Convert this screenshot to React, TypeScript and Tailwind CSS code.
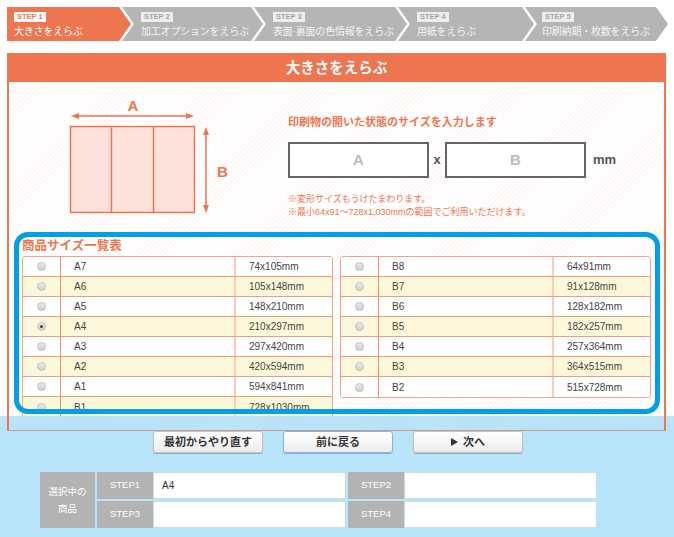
import React from 'react';

const steps = [
  { label: 'STEP 1', text: '大きさをえらぶ', cls: 'w-[124px] pl-[7px] bg-[#ed7550] [clip-path:polygon(0_0,calc(100%_-_12px)_0,100%_50%,calc(100%_-_12px)_100%,0_100%)]', active: true },
  { label: 'STEP 2', text: '加工オプションをえらぶ', cls: 'w-[141px] -ml-[9px] pl-[19px] bg-[#b5b5b5] [clip-path:polygon(0_0,calc(100%_-_12px)_0,100%_50%,calc(100%_-_12px)_100%,0_100%,12px_50%)]', active: false },
  { label: 'STEP 3', text: '表面·裏面の色情報をえらぶ', cls: 'w-[153px] -ml-[9px] pl-[19px] bg-[#b5b5b5] [clip-path:polygon(0_0,calc(100%_-_12px)_0,100%_50%,calc(100%_-_12px)_100%,0_100%,12px_50%)]', active: false },
  { label: 'STEP 4', text: '用紙をえらぶ', cls: 'w-[136px] -ml-[9px] pl-[19px] bg-[#b5b5b5] [clip-path:polygon(0_0,calc(100%_-_12px)_0,100%_50%,calc(100%_-_12px)_100%,0_100%,12px_50%)]', active: false },
  { label: 'STEP 5', text: '印刷納期・枚数をえらぶ', cls: 'w-[143px] -ml-[9px] pl-[17px] bg-[#b5b5b5] [clip-path:polygon(0_0,calc(100%_-_12px)_0,100%_50%,calc(100%_-_12px)_100%,0_100%,12px_50%)]', active: false },
];

const aSizes = [
  ['A7', '74x105mm'], ['A6', '105x148mm'], ['A5', '148x210mm'], ['A4', '210x297mm'],
  ['A3', '297x420mm'], ['A2', '420x594mm'], ['A1', '594x841mm'], ['B1', '728x1030mm'],
];
const bSizes = [
  ['B8', '64x91mm'], ['B7', '91x128mm'], ['B6', '128x182mm'], ['B5', '182x257mm'],
  ['B4', '257x364mm'], ['B3', '364x515mm'], ['B2', '515x728mm'],
];

function Radio({ checked }: { checked?: boolean }) {
  return (
    <span className="flex h-[9px] w-[9px] items-center justify-center rounded-full border border-[#bdbdbd] bg-[linear-gradient(#ececec,#cfcfcf)]">
      {checked && <span className="h-[3px] w-[3px] rounded-full bg-[#444]" />}
    </span>
  );
}

function SizeTable({ rows, checked }: { rows: string[][]; checked?: string }) {
  return (
    <div className="w-[311px] self-start overflow-hidden rounded-[3px] border border-[#f1a48c] bg-white">
      {rows.map(([name, size], i) => (
        <div
          key={name}
          className={i % 2 === 1 ? 'flex h-[20px] border-b border-[#f09c7e] bg-[#fdf8da] last:border-b-0' : 'flex h-[20px] border-b border-[#f09c7e] bg-white last:border-b-0'}
        >
          <div className="flex w-[38px] items-center justify-center border-r border-[#ee8d6c]">
            <Radio checked={name === checked} />
          </div>
          <div className="flex w-[175px] items-center border-r-2 border-[#f8cbbd] pl-[13px] text-[10px] text-[#444]">{name}</div>
          <div className="flex flex-1 items-center pl-[13px] text-[10px] text-[#444]">{size}</div>
        </div>
      ))}
    </div>
  );
}

function Diagram() {
  const o = '#ed7550';
  return (
    <svg width="170" height="130" viewBox="0 0 170 130" className="ml-[51px] mt-[13px] shrink-0">
      <text x="73" y="16" textAnchor="middle" fontSize="15" fontWeight="bold" fill={o} fontFamily="Liberation Sans, sans-serif">A</text>
      <line x1="16" y1="21" x2="129" y2="21" stroke={o} strokeWidth="1.5" />
      <polygon points="11,21 19,18 19,24" fill={o} />
      <polygon points="134,21 126,18 126,24" fill={o} />
      <rect x="10.5" y="31.5" width="124" height="86" fill="#fce2da" stroke={o} strokeWidth="1.5" />
      <line x1="51.5" y1="31.5" x2="51.5" y2="117.5" stroke={o} strokeWidth="1.5" />
      <line x1="93.5" y1="31.5" x2="93.5" y2="117.5" stroke={o} strokeWidth="1.5" />
      <line x1="146" y1="37" x2="146" y2="113" stroke={o} strokeWidth="1.5" />
      <polygon points="146,32 143,40 149,40" fill={o} />
      <polygon points="146,118 143,110 149,110" fill={o} />
      <text x="157" y="82" fontSize="15" fontWeight="bold" fill={o} fontFamily="Liberation Sans, sans-serif">B</text>
    </svg>
  );
}

function Button({ children, focused }: { children: React.ReactNode; focused?: boolean }) {
  return (
    <button
      className={focused
        ? 'flex h-[22px] w-[110px] items-center justify-center gap-[5px] rounded-[3px] border border-[#86b4e6] bg-[linear-gradient(#ffffff,#ececec)] text-[11px] font-bold text-[#333] shadow-[0_1px_1px_rgba(0,0,0,0.25)]'
        : 'flex h-[22px] w-[110px] items-center justify-center gap-[5px] rounded-[3px] border border-[#c2c2c2] bg-[linear-gradient(#ffffff,#ececec)] text-[11px] font-bold text-[#333] shadow-[0_1px_1px_rgba(0,0,0,0.25)]'}
    >
      {children}
    </button>
  );
}

function Pair({ label, value }: { label: string; value?: string }) {
  return (
    <div className="flex h-[27px]">
      <div className="flex w-[56px] items-center justify-center bg-[#b3b3b3] text-[9.5px] text-white">{label}</div>
      <div className="flex w-[193px] items-center border border-[#c6dde9] bg-white pl-[8px] text-[10px] text-[#333]">{value}</div>
    </div>
  );
}

export default function App() {
  return (
    <div className="min-h-[537px] w-[674px] bg-[linear-gradient(to_bottom,#ffffff_416px,#b9e5fb_416px)] [font-family:'Liberation_Sans','Noto_Sans_CJK_JP',sans-serif]">
      {/* steps */}
      <div className="flex pl-[7px] pt-[7px]">
        {steps.map((s) => (
          <div key={s.label} className={`h-[34px] shrink-0 pt-[5px] leading-none ${s.cls}`}>
            <div
              className={s.active
                ? 'h-[10px] w-fit bg-white px-[3px] text-[7.5px] font-bold leading-[10px] text-[#ed7550]'
                : 'h-[10px] w-fit bg-[#ededed] px-[3px] text-[7.5px] font-bold leading-[10px] text-[#a5a5a5]'}
            >
              {s.label}
            </div>
            <div className={s.active ? 'mt-[3px] whitespace-nowrap text-[10px] leading-[13px] tracking-[-0.2px] text-white' : 'mt-[3px] whitespace-nowrap text-[10px] leading-[13px] tracking-[-0.2px] text-[#f4f4f4]'}>{s.text}</div>
          </div>
        ))}
      </div>

      {/* panel */}
      <div className="ml-[7px] mt-[12px] w-[659px] border-x-2 border-t-2 border-b border-[#ed7550] border-b-[#c99a94]">
        <div className="flex h-[27px] items-center justify-center bg-[#ed7550] text-[14.5px] font-bold text-white">大きさをえらぶ</div>
        <div className="bg-[repeating-linear-gradient(135deg,rgba(237,117,80,0.06)_0_1px,transparent_1px_3.5px)] pb-[14px]">
          <div className="flex h-[150px]">
            <Diagram />
            <div className="ml-[58px] mt-[33px]">
              <p className="text-[11px] font-bold leading-[14px] text-[#ed7550]">印刷物の開いた状態のサイズを入力します</p>
              <div className="mt-[13px] flex items-center">
                <div className="flex h-[36px] w-[141px] items-center justify-center border-2 border-[#666] bg-white text-[15px] font-bold text-[#bcbcbc]">A</div>
                <div className="w-[16px] text-center text-[13px] font-bold text-[#555]">x</div>
                <div className="flex h-[36px] w-[141px] items-center justify-center border-2 border-[#666] bg-white text-[15px] font-bold text-[#bcbcbc]">B</div>
                <div className="ml-[7px] text-[13px] font-bold text-[#555]">mm</div>
              </div>
              <div className="mt-[15px] text-[9px] leading-[13px] text-[#ed7550]">
                <p>※変形サイズもうけたまわります。</p>
                <p>※最小64x91～728x1,030mmの範囲でご利用いただけます。</p>
              </div>
            </div>
          </div>

          <div className="relative ml-[5px] h-[184px] w-[646px] overflow-hidden">
            <div className="pl-[8px] pt-[6px]">
              <p className="mb-[1px] text-[12.5px] font-bold leading-[17px] text-[#ed7550]">商品サイズ一覧表</p>
              <div className="flex gap-[7px]">
                <SizeTable rows={aSizes} checked="A4" />
                <SizeTable rows={bSizes} />
              </div>
            </div>
            <div className="pointer-events-none absolute left-0 top-0 h-[182px] w-[646px] rounded-[14px] border-[5px] border-[#00a0e9]" />
          </div>
        </div>
      </div>

      {/* buttons */}
      <div className="flex justify-center gap-[20px] pl-[2px]">
        <Button>最初からやり直す</Button>
        <Button focused>前に戻る</Button>
        <Button>
          <svg width="7" height="8" viewBox="0 0 7 8"><polygon points="0,0 7,4 0,8" fill="#333" /></svg>
          次へ
        </Button>
      </div>

      {/* selected summary */}
      <div className="ml-[40px] mt-[19px] flex gap-[2px]">
        <div className="flex h-[56px] w-[55px] items-center justify-center bg-[#b3b3b3] text-center text-[9.5px] leading-[17px] text-white">
          選択中の<br />商品
        </div>
        <div className="flex flex-col gap-[2px]">
          <div className="flex gap-[2px]">
            <Pair label="STEP1" value="A4" />
            <Pair label="STEP2" />
          </div>
          <div className="flex gap-[2px]">
            <Pair label="STEP3" />
            <Pair label="STEP4" />
          </div>
        </div>
      </div>
    </div>
  );
}
